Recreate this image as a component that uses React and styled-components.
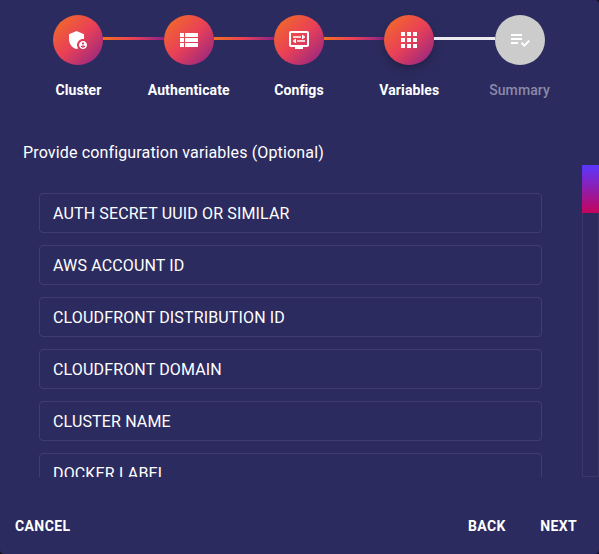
import React from "react";
import styled, { createGlobalStyle } from "styled-components";
import {
  MdAdminPanelSettings,
  MdApps,
  MdDisplaySettings,
  MdPlaylistAddCheck,
  MdViewList,
} from "react-icons/md";

const GlobalStyle = createGlobalStyle`
  * { box-sizing: border-box; }
  body { margin: 0; background: #0c0b1c; font-family: Roboto, sans-serif; }
`;

const Dialog = styled.main`
  display: flex;
  flex-direction: column;
  width: 599px;
  height: 554px;
  overflow: hidden;
  background: #2c2b5f;
  border-radius: 0 4px 4px 4px;
  color: #fff;
`;

const Stepper = styled.ol`
  display: flex;
  margin: 0;
  padding: 15px 24.25px 0 23.25px;
  list-style: none;
`;

const Step = styled.li`
  flex: 1;
  min-width: 0;
`;

const StepTrack = styled.div`
  display: flex;
  margin-left: calc(50% - 25px);
  width: 100%;
`;

const StepCircle = styled.div`
  display: flex;
  flex: none;
  align-items: center;
  justify-content: center;
  width: 50px;
  height: 50px;
  border-radius: 50%;
  font-size: 24px;
  background: ${(p) =>
    p.$state === "pending"
      ? "#ccc"
      : "linear-gradient(136deg, rgb(242,113,33) 0%, rgb(233,64,87) 50%, rgb(138,35,135) 100%)"};
  box-shadow: ${(p) => (p.$state === "active" ? "0 4px 10px rgba(0,0,0,.25)" : "none")};
`;

const Connector = styled.div`
  flex: 1;
  height: 3px;
  margin-top: 22px;
  background: ${(p) =>
    p.$done
      ? "linear-gradient(95deg, rgb(242,113,33) 0%, rgb(233,64,87) 50%, rgb(138,35,135) 100%)"
      : "#eaeaf0"};
`;

const StepLabel = styled.div`
  margin-top: 15px;
  font-size: 14px;
  font-weight: ${(p) => (p.$muted ? 500 : 700)};
  letter-spacing: 0.1px;
  line-height: 20px;
  text-align: center;
  white-space: nowrap;
  color: ${(p) => (p.$muted ? "#8b8aa8" : "#fff")};
`;

const Title = styled.h1`
  margin: 41px 0 0 23px;
  font-size: 16px;
  font-weight: 400;
  letter-spacing: 0.15px;
  line-height: 24px;
`;

const ScrollPane = styled.section`
  display: flex;
  justify-content: space-between;
  height: 312px;
  overflow: hidden;
`;

const Fields = styled.div`
  display: flex;
  flex-direction: column;
  gap: 12px;
  width: 503px;
  margin-left: 39px;
  padding-top: 28px;
`;

const Field = styled.div`
  flex: none;
  height: 40px;
  padding: 0 13px;
  border: 1px solid #403e70;
  border-radius: 4px;
  font-size: 16px;
  letter-spacing: 0.15px;
  line-height: 39px;
`;

const ScrollTrack = styled.div`
  width: 17px;
  border: 1px solid #3a386a;
  border-top: 0;
`;

const ScrollThumb = styled.div`
  height: 48px;
  margin: 0 -1px;
  background: linear-gradient(#5a37ff, #c4045c);
`;

const Actions = styled.footer`
  display: flex;
  gap: 14.5px;
  padding: 31px 11.8px 0 5px;
`;

const ActionButton = styled.button`
  height: 36px;
  padding: 0 10px;
  border: 0;
  background: none;
  color: #fff;
  font: 700 14px/36px Roboto, sans-serif;
  letter-spacing: 0.4px;
  margin-right: ${(p) => (p.$lead ? "auto" : "0")};
`;

const steps = [
  { label: "Cluster", Icon: MdAdminPanelSettings, state: "done" },
  { label: "Authenticate", Icon: MdViewList, state: "done" },
  { label: "Configs", Icon: MdDisplaySettings, state: "done" },
  { label: "Variables", Icon: MdApps, state: "active" },
  { label: "Summary", Icon: MdPlaylistAddCheck, state: "pending" },
];

const variables = [
  "AUTH SECRET UUID OR SIMILAR",
  "AWS ACCOUNT ID",
  "CLOUDFRONT DISTRIBUTION ID",
  "CLOUDFRONT DOMAIN",
  "CLUSTER NAME",
  "DOCKER LABEL",
];

export default function App() {
  return (
    <>
      <GlobalStyle />
      <Dialog>
        <Stepper>
          {steps.map(({ label, Icon, state }, i) => (
            <Step key={label}>
              <StepTrack>
                <StepCircle $state={state}>
                  <Icon />
                </StepCircle>
                {i < steps.length - 1 && <Connector $done={state === "done"} />}
              </StepTrack>
              <StepLabel $muted={state === "pending"}>{label}</StepLabel>
            </Step>
          ))}
        </Stepper>
        <Title>Provide configuration variables (Optional)</Title>
        <ScrollPane>
          <Fields>
            {variables.map((name) => (
              <Field key={name}>{name}</Field>
            ))}
          </Fields>
          <ScrollTrack>
            <ScrollThumb />
          </ScrollTrack>
        </ScrollPane>
        <Actions>
          <ActionButton $lead>CANCEL</ActionButton>
          <ActionButton>BACK</ActionButton>
          <ActionButton>NEXT</ActionButton>
        </Actions>
      </Dialog>
    </>
  );
}
